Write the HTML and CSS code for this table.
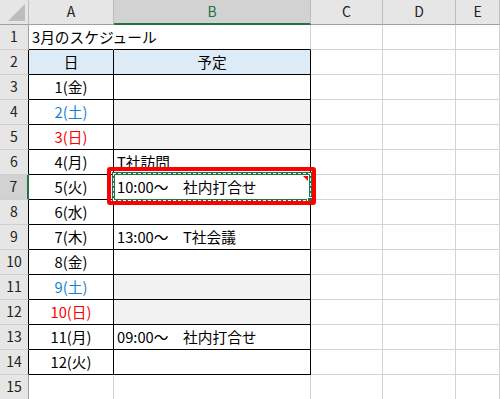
FILE: index.html
```html
<!DOCTYPE html>
<html lang="ja">
<head>
    <meta charset="UTF-8">
    <meta name="viewport" content="width=device-width, initial-scale=1.0">
    <link rel="stylesheet" href="styles.css">
    <title>3月のスケジュール</title>
</head>
<body>
    <div class="sheet">
        <!-- column headers -->
        <div class="corner"><span class="tri"></span></div>
        <div class="ch">A</div>
        <div class="ch sel">B</div>
        <div class="ch">C</div>
        <div class="ch">D</div>
        <div class="ch">E</div>

        <div class="rh">1</div>
        <div class="c top over">3月のスケジュール</div>
        <div class="c top"></div>
        <div class="c"></div><div class="c"></div><div class="c"></div>

        <div class="rh edge">2</div>
        <div class="c t mid head">日</div>
        <div class="c t mid head">予定</div>
        <div class="c"></div><div class="c"></div><div class="c"></div>

        <div class="rh edge">3</div>
        <div class="c t mid">1(金)</div>
        <div class="c t"></div>
        <div class="c"></div><div class="c"></div><div class="c"></div>

        <div class="rh edge">4</div>
        <div class="c t mid sat">2(土)</div>
        <div class="c t fill"></div>
        <div class="c"></div><div class="c"></div><div class="c"></div>

        <div class="rh edge">5</div>
        <div class="c t mid sun">3(日)</div>
        <div class="c t fill"></div>
        <div class="c"></div><div class="c"></div><div class="c"></div>

        <div class="rh edge">6</div>
        <div class="c t mid">4(月)</div>
        <div class="c t">T社訪問</div>
        <div class="c"></div><div class="c"></div><div class="c"></div>

        <div class="rh edge sel">7</div>
        <div class="c t mid">5(火)</div>
        <div class="c t">10:00～　社内打合せ</div>
        <div class="c"></div><div class="c"></div><div class="c"></div>

        <div class="rh edge">8</div>
        <div class="c t mid">6(水)</div>
        <div class="c t"></div>
        <div class="c"></div><div class="c"></div><div class="c"></div>

        <div class="rh edge">9</div>
        <div class="c t mid">7(木)</div>
        <div class="c t">13:00～　T社会議</div>
        <div class="c"></div><div class="c"></div><div class="c"></div>

        <div class="rh edge">10</div>
        <div class="c t mid">8(金)</div>
        <div class="c t"></div>
        <div class="c"></div><div class="c"></div><div class="c"></div>

        <div class="rh edge">11</div>
        <div class="c t mid sat">9(土)</div>
        <div class="c t fill"></div>
        <div class="c"></div><div class="c"></div><div class="c"></div>

        <div class="rh edge">12</div>
        <div class="c t mid sun">10(日)</div>
        <div class="c t fill"></div>
        <div class="c"></div><div class="c"></div><div class="c"></div>

        <div class="rh edge">13</div>
        <div class="c t mid">11(月)</div>
        <div class="c t">09:00～　社内打合せ</div>
        <div class="c"></div><div class="c"></div><div class="c"></div>

        <div class="rh edge">14</div>
        <div class="c t mid">12(火)</div>
        <div class="c t"></div>
        <div class="c"></div><div class="c"></div><div class="c"></div>

        <div class="rh">15</div>
        <div class="c"></div><div class="c"></div>
        <div class="c"></div><div class="c"></div><div class="c"></div>

        <!-- copy marquee on B7 and the red callout around it -->
        <div class="marquee">
            <span class="ants"></span>
            <span class="note"></span>
            <span class="handle"></span>
        </div>
        <div class="callout"></div>
    </div>
</body>
</html>
```

FILE: styles.css
```css
body {
    margin: 0;
    padding: 0;
    background-color: #fff;
    overflow: hidden;
}

.sheet {
    position: relative;
    display: grid;
    grid-template-columns: 29px 85px 197px 72px 73px 1fr;
    grid-auto-rows: 25px;
    width: 500px;
    height: 399px;
    font-family: "Noto Sans CJK JP", "Noto Sans", sans-serif;
    font-size: 14.7px;
    color: #000;
}

.sheet > div {
    box-sizing: border-box;
}

/* headers */
.corner {
    position: relative;
    background-color: #e6e6e6;
    border-right: 1px solid #bdbdbd;
    border-bottom: 1px solid #9e9e9e;
}

.tri {
    position: absolute;
    right: 3px;
    bottom: 3px;
    width: 0;
    height: 0;
    border-left: 17px solid transparent;
    border-bottom: 17px solid #bcbcbc;
}

.ch {
    background-color: #e6e6e6;
    border-right: 1px solid #bdbdbd;
    border-bottom: 1px solid #9e9e9e;
    color: #222;
    font-size: 14px;
    line-height: 23px;
    text-align: center;
}

.ch.sel {
    background-color: #d2d2d2;
    border-bottom: 2px solid #217346;
    color: #217346;
}

.rh {
    background-color: #e6e6e6;
    border-right: 1px solid #9e9e9e;
    border-bottom: 1px solid #cfcfcf;
    color: #222;
    font-size: 14px;
    line-height: 23px;
    text-align: center;
}

.rh.edge {
    border-right-color: #000;
}

.rh.sel {
    background-color: #d2d2d2;
    border-right: 2px solid #217346;
}

/* cells */
.c {
    border-right: 1px solid #d4d4d4;
    border-bottom: 1px solid #d4d4d4;
    padding-left: 3px;
    line-height: 23px;
    white-space: nowrap;
}

.c.top {
    border-bottom-color: #000;
}

.c.over {
    overflow: visible;
    border-right-color: transparent;
    position: relative;
    z-index: 1;
}

.c.t {
    border-right-color: #000;
    border-bottom-color: #000;
}

.mid {
    text-align: center;
    padding-left: 0;
}

.head {
    background-color: #ddebf7;
}

.fill {
    background-color: #f2f2f2;
}

.sat {
    color: #1a7fd4;
}

.sun {
    color: #ff0000;
}

/* overlays */
.marquee {
    position: absolute;
    left: 112px;
    top: 172px;
    width: 200px;
    height: 30px;
    box-sizing: border-box;
    border: 3px solid #217346;
}

.ants {
    position: absolute;
    left: -2px;
    top: -2px;
    right: -2px;
    bottom: -2px;
    border: 1px dashed #fff;
}

.note {
    position: absolute;
    right: 1px;
    top: 1px;
    width: 0;
    height: 0;
    border-left: 5px solid transparent;
    border-top: 5px solid #ff0000;
}

.handle {
    position: absolute;
    right: -4px;
    bottom: -4px;
    width: 4px;
    height: 4px;
    background-color: #217346;
    border: 1px solid #fff;
}

.callout {
    position: absolute;
    left: 107px;
    top: 167px;
    width: 209px;
    height: 38px;
    box-sizing: border-box;
    border: 4px solid #ff0000;
    border-radius: 3px;
}
```
